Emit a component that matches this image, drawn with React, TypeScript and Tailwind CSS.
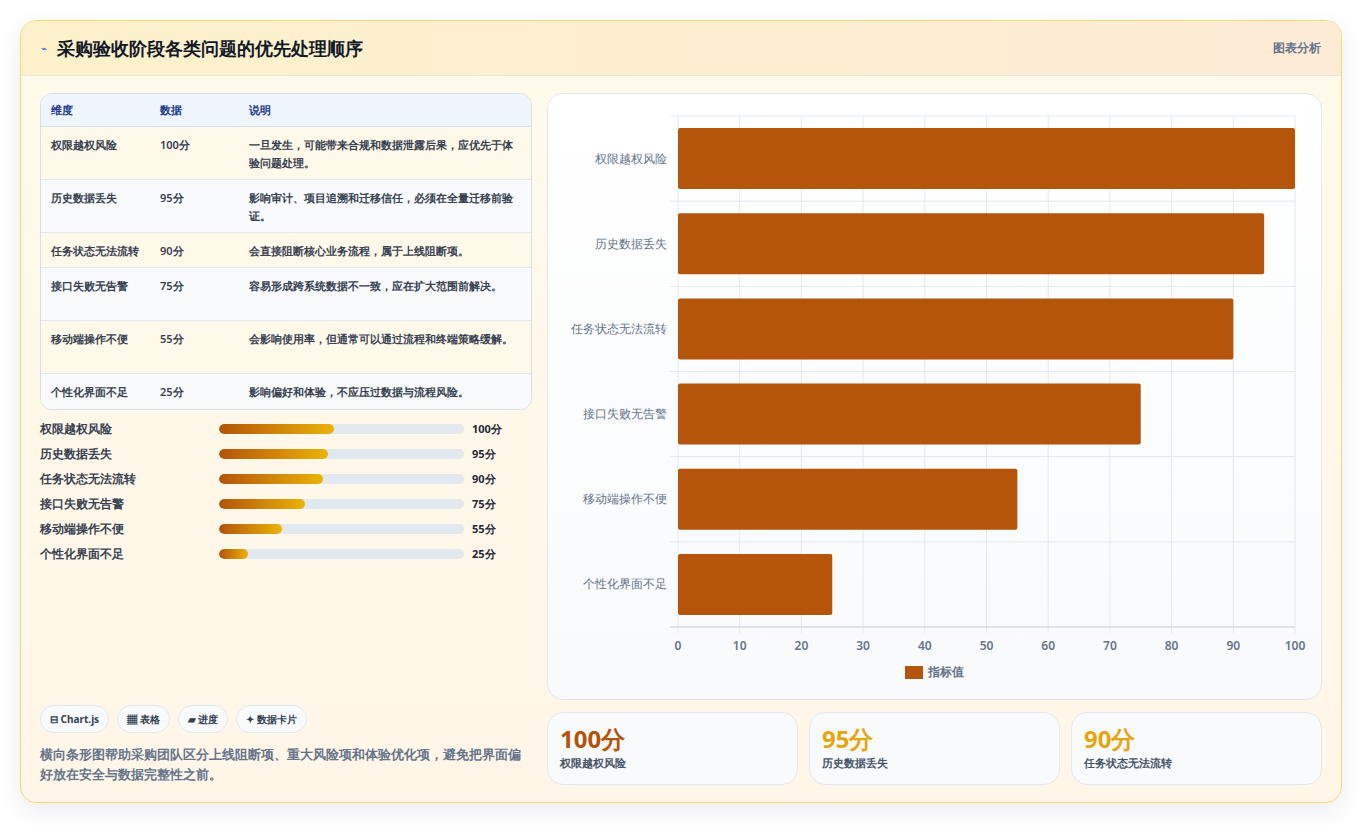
import React from "react";

const rows = [
  { n: "权限越权风险", v: 100, d: "一旦发生，可能带来合规和数据泄露后果，应优先于体验问题处理。" },
  { n: "历史数据丢失", v: 95, d: "影响审计、项目追溯和迁移信任，必须在全量迁移前验证。" },
  { n: "任务状态无法流转", v: 90, d: "会直接阻断核心业务流程，属于上线阻断项。" },
  { n: "接口失败无告警", v: 75, d: "容易形成跨系统数据不一致，应在扩大范围前解决。" },
  { n: "移动端操作不便", v: 55, d: "会影响使用率，但通常可以通过流程和终端策略缓解。" },
  { n: "个性化界面不足", v: 25, d: "影响偏好和体验，不应压过数据与流程风险。" },
];
const rowH = [53, 53, 35, 53, 53, 35];

function Chart() {
  const x0 = 130, x1 = 747, y0 = 22, y1 = 533;
  const band = (y1 - y0) / 6;
  const W = x1 - x0;
  return (
    <svg width="773" height="607" className="block">
      {Array.from({ length: 11 }).map((_, i) => {
        const x = x0 + (W * i) / 10;
        return (
          <g key={i}>
            <line x1={x} x2={x} y1={y0} y2={y1 + 6} stroke="#e2e8f0" />
            <text x={x} y={556} textAnchor="middle" fontSize="12" fontWeight="600" fill="#64748b">{i * 10}</text>
          </g>
        );
      })}
      {Array.from({ length: 7 }).map((_, i) => (
        <line key={i} x1={x0 - 8} x2={x1} y1={y0 + band * i} y2={y0 + band * i} stroke="#e2e8f0" />
      ))}
      <line x1={x0 - 8} x2={x1} y1={y1} y2={y1} stroke="#cbd5e1" />
      {rows.map((r, i) => {
        const yc = y0 + band * i + band / 2;
        return (
          <g key={r.n}>
            <rect x={x0} y={yc - 30.5} width={(W * r.v) / 100} height={61} rx="2" fill="#b5540b" />
            <text x={x0 - 11} y={yc + 4} textAnchor="end" fontSize="12" fill="#64748b">{r.n}</text>
          </g>
        );
      })}
      <rect x={357} y={572} width={18} height={13} fill="#b5540b" />
      <text x={380} y={582} fontSize="12" fontWeight="600" fill="#64748b">指标值</text>
    </svg>
  );
}

export default function App() {
  return (
    <div className="min-h-[825px] bg-white p-5 font-['Noto_Sans_CJK_SC','Noto_Sans',sans-serif]">
      <div className="w-[1322px] h-[783px] rounded-2xl border border-[#f7d774] bg-gradient-to-b from-[#fffaea] to-[#fff6e8] shadow-[0_8px_24px_rgba(0,0,0,0.08)] overflow-hidden flex flex-col">
        <div className="h-[55px] shrink-0 flex items-center justify-between px-5 bg-gradient-to-r from-[#fdf1cb] to-[#fdebd6] border-b border-[#e9e6df]">
          <div className="flex items-center gap-2.5">
            <span className="text-[10px] text-[#3b5bdb]">⌁</span>
            <span className="text-[18px] font-bold text-[#111827]">采购验收阶段各类问题的优先处理顺序</span>
          </div>
          <span className="text-[12px] font-semibold text-[#64748b]">图表分析</span>
        </div>
        <div className="flex-1 flex gap-[15px] px-[19px] pt-[17px] pb-[18px]">
          <div className="w-[496px] flex flex-col">
            <div className="rounded-xl border border-[#d6dee9] overflow-hidden text-[11px] font-semibold text-[#374151]">
              <div className="h-[33px] flex items-center bg-[#eef5fd] border-b border-[#d6dee9] text-[#1e3a8a]">
                <div className="w-[119px] pl-[10px]">维度</div>
                <div className="w-[89px]">数据</div>
                <div>说明</div>
              </div>
              {rows.map((r, i) => (
                <div key={r.n} style={{ height: rowH[i] }} className={`flex items-start pt-[9px] border-b last:border-b-0 border-[#e2e8f0] ${i % 2 === 0 ? "bg-[#fff9ea]" : "bg-[#f8fafc]"}`}>
                  <div className="w-[119px] pl-[10px] leading-[17px]">{r.n}</div>
                  <div className="w-[89px] leading-[17px]">{r.v}分</div>
                  <div className="flex-1 pr-[12px] leading-[18px]">{r.d}</div>
                </div>
              ))}
            </div>
            <div className="mt-[10px] flex flex-col gap-[7px]">
              {rows.map((r) => (
                <div key={r.n} className="h-[18px] flex items-center text-[12px] font-semibold text-[#374151]">
                  <div className="w-[179px]">{r.n}</div>
                  <div className="w-[245px] h-[10px] rounded-full bg-[#e2e8f0] overflow-hidden">
                    <div className="h-full rounded-full bg-gradient-to-r from-[#b45309] to-[#eab308]" style={{ width: `${r.v * 0.47}%` }} />
                  </div>
                  <div className="ml-2 text-[11px] font-bold text-[#1f2937]">{r.v}分</div>
                </div>
              ))}
            </div>
            <div className="mt-auto">
              <div className="flex gap-2 text-[10px] font-bold text-[#334155]">
                {["⊟ Chart.js", "▦ 表格", "▰ 进度", "✦ 数据卡片"].map((c) => (
                  <span key={c} className="h-[28px] px-[9px] flex items-center rounded-full border border-[#e2e8f0] bg-[#f8fafc]">{c}</span>
                ))}
              </div>
              <p className="mt-[12px] text-[12.5px] leading-[20px] font-semibold text-[#64748b]">横向条形图帮助采购团队区分上线阻断项、重大风险项和体验优化项，避免把界面偏好放在安全与数据完整性之前。</p>
            </div>
          </div>
          <div className="flex-1 flex flex-col">
            <div className="h-[607px] rounded-2xl border border-[#e2e8f0] bg-gradient-to-b from-white to-[#f8fafc] overflow-hidden">
              <Chart />
            </div>
            <div className="mt-[12px] grid grid-cols-3 gap-[11px]">
              {[
                ["100分", "权限越权风险", "text-[#b45309]"],
                ["95分", "历史数据丢失", "text-[#e8a50c]"],
                ["90分", "任务状态无法流转", "text-[#e8a50c]"],
              ].map(([v, l, c]) => (
                <div key={l} className="h-[73px] rounded-2xl border border-[#e2e8f0] bg-[#f8fafc] px-[12px] pt-[10px]">
                  <div className={`text-[24px] leading-[32px] font-bold ${c}`}>{v}</div>
                  <div className="text-[11px] font-semibold text-[#475569]">{l}</div>
                </div>
              ))}
            </div>
          </div>
        </div>
      </div>
    </div>
  );
}
